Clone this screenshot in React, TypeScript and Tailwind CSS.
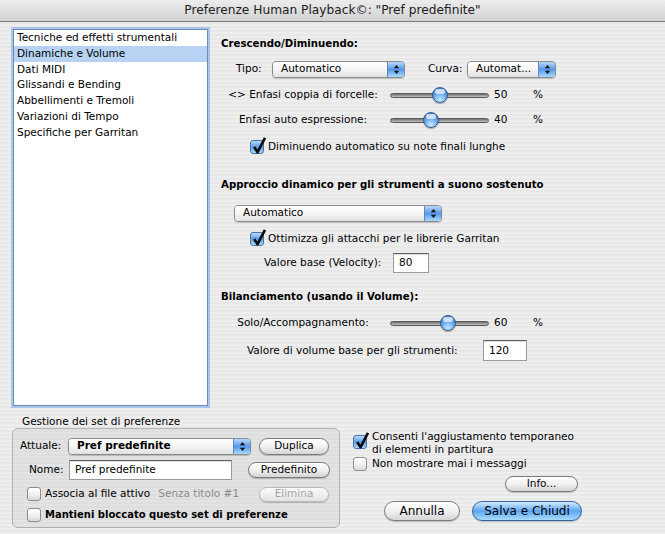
import React from "react";

const categories = [
  "Tecniche ed effetti strumentali",
  "Dinamiche e Volume",
  "Dati MIDI",
  "Glissandi e Bending",
  "Abbellimenti e Tremoli",
  "Variazioni di Tempo",
  "Specifiche per Garritan",
];

// popup menu, aqua style with the blue arrow cap
const Popup = ({ label, className, bold }: { label: string; className: string; bold?: boolean }) => (
  <div
    className={`${className} h-[17px] flex rounded-[4px] border border-[#8a8a8a] overflow-hidden shadow-[0_1px_1px_rgba(0,0,0,0.18)]`}
  >
    <div
      className={`flex-1 flex items-center pl-[8px] bg-linear-to-b from-white via-[#f5f5f5] to-[#e0e0e0] ${
        bold ? "font-bold" : ""
      }`}
    >
      {label}
    </div>
    <div className="w-[17px] flex items-center justify-center border-l border-[#5f87bf] bg-linear-to-b from-[#b9d9fb] via-[#5598ea] to-[#a9dafd]">
      <svg width="7" height="11" viewBox="0 0 7 11">
        <path d="M0.8 4.3 L3.5 1 L6.2 4.3 Z" fill="#111" />
        <path d="M0.8 6.7 L3.5 10 L6.2 6.7 Z" fill="#111" />
      </svg>
    </div>
  </div>
);

const Slider = ({ value }: { value: number }) => (
  <div className="relative w-[99px] h-[16px] flex items-center">
    <div className="w-full h-[5px] rounded-full border border-[#5a5a5a] bg-linear-to-b from-[#6f6f6f] to-[#c4c4c4]" />
    <div
      className="absolute top-0 w-[16px] h-[16px] rounded-full border border-[#35598e] bg-[radial-gradient(circle_at_50%_85%,#c9ecff_0%,#5b9ee8_55%,#2c68b8_100%)] shadow-[0_1px_1px_rgba(0,0,0,0.3)]"
      style={{ left: value * 0.83 }}
    >
      <div className="mx-auto mt-[1px] w-[10px] h-[5px] rounded-full bg-white/70" />
    </div>
  </div>
);

const Check = ({ checked }: { checked?: boolean }) => (
  <div
    className={`relative shrink-0 w-[14px] h-[14px] rounded-[3px] border ${
      checked
        ? "border-[#4a72aa] bg-linear-to-b from-[#b8dafc] via-[#5a9de9] to-[#a8dafd]"
        : "border-[#8c8c8c] bg-linear-to-b from-white via-[#f2f2f2] to-[#d9d9d9]"
    }`}
  >
    {checked && (
      <svg className="absolute left-[1px] -top-[5px]" width="15" height="19" viewBox="0 0 15 19">
        <path d="M2.2 11 L5.6 16.2 L13 1.8" stroke="#0b0b0b" strokeWidth="2.6" fill="none" strokeLinejoin="round" />
      </svg>
    )}
  </div>
);

const Button = ({
  children,
  className,
  primary,
  disabled,
}: {
  children: React.ReactNode;
  className: string;
  primary?: boolean;
  disabled?: boolean;
}) => (
  <div
    className={`${className} flex items-center justify-center rounded-full border shadow-[0_1px_1px_rgba(0,0,0,0.2)] ${
      primary
        ? "border-[#36649f] bg-linear-to-b from-[#d2ecff] via-[#5ea5f0] to-[#a7dcff]"
        : disabled
        ? "border-[#b9b9b9] text-[#a3a3a3] bg-linear-to-b from-[#fbfbfb] via-[#f0f0f0] to-[#e2e2e2]"
        : "border-[#7b7b7b] bg-linear-to-b from-white via-[#f1f1f1] to-[#d5d5d5]"
    }`}
  >
    {children}
  </div>
);

const Field = ({ value, className }: { value: string; className: string }) => (
  <div
    className={`${className} flex items-center pl-[5px] bg-white border border-[#9a9a9a] border-t-[#5f5f5f] shadow-[inset_0_1px_1px_rgba(0,0,0,0.15)]`}
  >
    {value}
  </div>
);

const SliderRow = ({ label, value, className }: { label: string; value: number; className: string }) => (
  <div className={`${className} h-[20px] flex items-center`}>
    <span className="ml-[2px] w-[160px] text-center">{label}</span>
    <div className="ml-[7px]">
      <Slider value={value} />
    </div>
    <span className="ml-[5px] w-[39px]">{value}</span>
    <span>%</span>
  </div>
);

export default function App() {
  return (
    <div className="font-['DejaVu_Sans',sans-serif] text-[10.5px] text-black w-[665px] h-[534px] overflow-hidden flex flex-col bg-[repeating-linear-gradient(180deg,#eeeeee_0px,#eeeeee_2px,#e8e8e8_2px,#e8e8e8_4px)]">
      {/* title bar */}
      <div className="h-[22px] shrink-0 flex items-center justify-center rounded-t-[6px] border-b border-[#7a7a7a] bg-linear-to-b from-[#ececec] to-[#d2d2d2] text-[12.2px] text-[#1c1c1c]">
        Preferenze Human Playback©: "Pref predefinite"
      </div>

      <div className="flex h-[388px] shrink-0">
        {/* category list */}
        <div className="ml-[13px] mt-[7px] w-[195px] h-[377px] bg-white border border-[#6b8cbb] shadow-[0_0_0_2px_#a9c6ea]">
          {categories.map((c, i) => (
            <div key={c} className={`h-[15.8px] leading-[15.8px] pl-[3px] ${i === 1 ? "bg-[#b7d2f2]" : ""}`}>
              {c}
            </div>
          ))}
        </div>

        {/* settings */}
        <div className="ml-[13px] flex flex-col">
          <div className="mt-[14px] h-[16px] flex items-center font-bold text-[10.2px]">Crescendo/Diminuendo:</div>

          <div className="mt-[7px] h-[20px] flex items-center">
            <span className="ml-[15px] w-[36px]">Tipo:</span>
            <Popup label="Automatico" className="w-[133px]" />
            <span className="ml-[23px] w-[39px]">Curva:</span>
            <Popup label="Automat..." className="w-[89px]" />
          </div>

          <SliderRow className="mt-[6px]" label="<> Enfasi coppia di forcelle:" value={50} />
          <SliderRow className="mt-[5px]" label="Enfasi auto espressione:" value={40} />

          <div className="mt-[7px] h-[20px] flex items-center">
            <div className="ml-[29px]">
              <Check checked />
            </div>
            <span className="ml-[4px]">Diminuendo automatico su note finali lunghe</span>
          </div>

          <div className="mt-[20px] h-[16px] flex items-center font-bold text-[10.2px]">
            Approccio dinamico per gli strumenti a suono sostenuto
          </div>

          <div className="mt-[10px] h-[20px] flex items-center">
            <Popup label="Automatico" className="ml-[13px] w-[208px]" />
          </div>

          <div className="mt-[6px] h-[20px] flex items-center">
            <div className="ml-[29px]">
              <Check checked />
            </div>
            <span className="ml-[4px]">Ottimizza gli attacchi per le librerie Garritan</span>
          </div>

          <div className="mt-[4px] h-[20px] flex items-center">
            <span className="ml-[43px] w-[129px]">Valore base (Velocity):</span>
            <Field value="80" className="w-[36px] h-[20px]" />
          </div>

          <div className="mt-[16px] h-[16px] flex items-center font-bold text-[10.2px]">
            Bilanciamento (usando il Volume):
          </div>

          <SliderRow className="mt-[8px]" label="Solo/Accompagnamento:" value={60} />

          <div className="mt-[7px] h-[21px] flex items-center">
            <span className="ml-[26px] w-[236px]">Valore di volume base per gli strumenti:</span>
            <Field value="120" className="w-[44px] h-[21px]" />
          </div>
        </div>
      </div>

      <div className="flex flex-1">
        {/* preference sets */}
        <div className="ml-[12px] w-[328px] flex flex-col">
          <div className="mt-[5px] h-[13px] leading-[13px] pl-[10px]">Gestione dei set di preferenze</div>
          <div className="h-[100px] rounded-[6px] border border-[#b0b0b0] bg-black/[0.045] flex flex-col">
            <div className="mt-[7px] h-[20px] flex items-center">
              <span className="ml-[7px] w-[48px]">Attuale:</span>
              <Popup label="Pref predefinite" className="w-[183px]" bold />
              <Button className="ml-auto mr-[10px] w-[70px] h-[17px]">Duplica</Button>
            </div>
            <div className="mt-[4px] h-[20px] flex items-center">
              <span className="ml-[16px] w-[40px]">Nome:</span>
              <Field value="Pref predefinite" className="w-[163px] h-[20px]" />
              <Button className="ml-auto mr-[9px] w-[82px] h-[16px]">Predefinito</Button>
            </div>
            <div className="mt-[4px] h-[20px] flex items-center">
              <div className="ml-[14px]">
                <Check />
              </div>
              <span className="ml-[4px]">Associa al file attivo</span>
              <span className="ml-[8px] text-[#8c8c8c]">Senza titolo #1</span>
              <Button className="ml-auto mr-[10px] w-[70px] h-[15px]" disabled>
                Elimina
              </Button>
            </div>
            <div className="mt-[1px] h-[19px] flex items-center">
              <div className="ml-[14px]">
                <Check />
              </div>
              <span className="ml-[4px] font-bold text-[10px]">Mantieni bloccato questo set di preferenze</span>
            </div>
          </div>
        </div>

        {/* options and dialog buttons */}
        <div className="ml-[13px] flex flex-col">
          <div className="mt-[20px] flex items-start">
            <div className="mt-[5px]">
              <Check checked />
            </div>
            <div className="ml-[5px] leading-[12.5px]">
              Consenti l'aggiustamento temporaneo
              <br />
              di elementi in partitura
            </div>
          </div>
          <div className="mt-[2px] h-[14px] flex items-center">
            <Check />
            <span className="ml-[5px]">Non mostrare mai i messaggi</span>
          </div>
          <Button className="mt-[5px] ml-[152px] w-[73px] h-[16px]">Info...</Button>
          <div className="mt-[9px] flex text-[12px]">
            <Button className="ml-[31px] w-[76px] h-[20px]">Annulla</Button>
            <Button className="ml-[12px] w-[110px] h-[20px]" primary>
              Salva e Chiudi
            </Button>
          </div>
        </div>
      </div>
    </div>
  );
}
